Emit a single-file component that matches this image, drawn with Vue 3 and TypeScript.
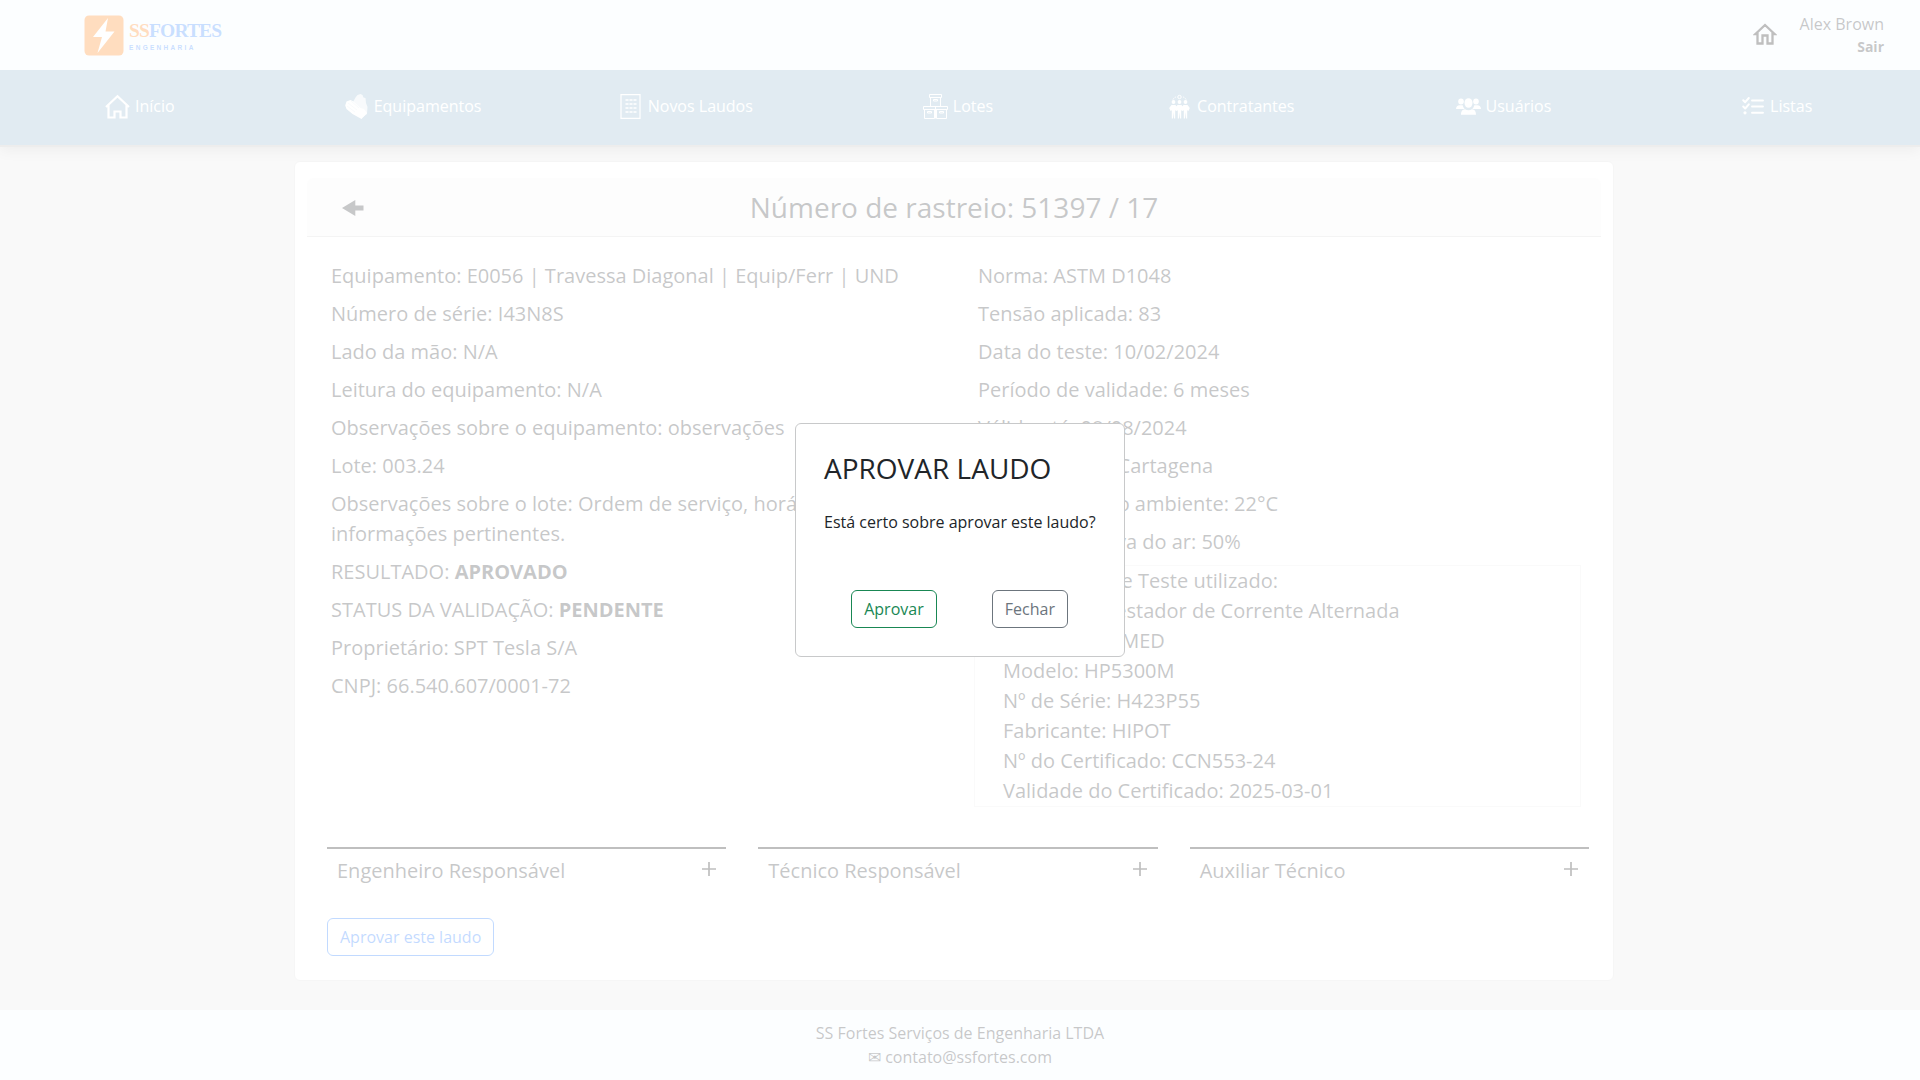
<script setup lang="ts">
interface Line {
  label: string
  strong?: string
}

const menu: { id: string; label: string }[] = [
  { id: 'home', label: 'Início' },
  { id: 'gloves', label: 'Equipamentos' },
  { id: 'report', label: 'Novos Laudos' },
  { id: 'boxes', label: 'Lotes' },
  { id: 'people', label: 'Contratantes' },
  { id: 'users', label: 'Usuários' },
  { id: 'list', label: 'Listas' },
]

const equipment: Line[] = [
  { label: 'Equipamento: E0056 | Travessa Diagonal | Equip/Ferr | UND' },
  { label: 'Número de série: I43N8S' },
  { label: 'Lado da mão: N/A' },
  { label: 'Leitura do equipamento: N/A' },
  { label: 'Observações sobre o equipamento: observações' },
  { label: 'Lote: 003.24' },
  { label: 'Observações sobre o lote: Ordem de serviço, horário, local, informações pertinentes.' },
  { label: 'RESULTADO: ', strong: 'APROVADO' },
  { label: 'STATUS DA VALIDAÇÃO: ', strong: 'PENDENTE' },
  { label: 'Proprietário: SPT Tesla S/A' },
  { label: 'CNPJ: 66.540.607/0001-72' },
]

const test: string[] = [
  'Norma: ASTM D1048',
  'Tensão aplicada: 83',
  'Data do teste: 10/02/2024',
  'Período de validade: 6 meses',
  'Válido até: 08/08/2024',
  'Local do teste: Cartagena',
  'Temperatura do ambiente: 22°C',
  'Umidade relativa do ar: 50%',
]

const instrument: string[] = [
  'Equipamento de Teste utilizado:',
  'Descrição: Testador de Corrente Alternada',
  'Marca: TECNMED',
  'Modelo: HP5300M',
  'Nº de Série: H423P55',
  'Fabricante: HIPOT',
  'Nº do Certificado: CCN553-24',
  'Validade do Certificado: 2025-03-01',
]

const staff: string[] = ['Engenheiro Responsável', 'Técnico Responsável', 'Auxiliar Técnico']
</script>

<template>
  <div class="page">
    <header class="top">
      <div class="logo">
        <svg class="bolt" width="40" height="41" viewBox="0 0 40 41">
          <rect x="0.5" y="0.5" width="39" height="40" rx="4.5" fill="#ff7a00" />
          <path d="M24 3 9 22h9l-4.500 16L30.500 16.500h-9z" fill="#fff" />
        </svg>
        <div class="brand">
          <div class="name"><span>SS</span>FORTES</div>
          <div class="sub">ENGENHARIA</div>
        </div>
      </div>
      <div class="account">
        <svg width="24" height="22" viewBox="0 0 24 22">
          <path d="M4.500 20.500V11H2.500L12 2l9.500 9h-2v9.500h-5v-8h-5v8z" fill="none" stroke="#000" stroke-width="2.300" />
        </svg>
        <div class="user">
          <div>Alex Brown</div>
          <strong>Sair</strong>
        </div>
      </div>
    </header>

    <nav class="menu">
      <a v-for="item in menu" :key="item.id" :class="item.id">
        <svg v-if="item.id === 'home'" width="25" height="25" viewBox="0 0 25 25" fill="none" stroke="#fff" stroke-width="2.200">
          <path d="M1 13 12.500 2.300 24 13M3.500 11v12.500h6v-6h6v6h6V11" />
        </svg>
        <svg v-else-if="item.id === 'gloves'" width="25" height="25" viewBox="0 0 25 25">
          <path d="M9 8 11.500 3.500l2-2.500 3-1 2 1 1 2.500 2 .500.500 5 1.500 4-.500 7-4 3z" fill="#fff" opacity=".75" />
          <path d="m1.200 11.500 1.300-4L6.500 6l3 1.500 7 6.500 3.500 1 3 4-5.500 6-9-5-6-5z" fill="#fff" />
          <path d="m4 9 9 7M3 12l8 6M7 7l8 7" stroke="#b9cfdd" stroke-width=".4" />
        </svg>
        <svg v-else-if="item.id === 'report'" width="25" height="25" viewBox="0 0 25 25" fill="none" stroke="#fff">
          <path d="M3 .600h19v23.800H3z" stroke-width="1.200" />
          <path d="M7.500 6h11M7.500 10h11M7.500 14h11M7.500 18h11" stroke-width="1.500" stroke-dasharray="3 1" />
        </svg>
        <svg v-else-if="item.id === 'boxes'" width="25" height="25" viewBox="0 0 25 25" fill="none" stroke="#fff">
          <path d="M6.500.500h12v3h-12zM7.500 3.500v8.500M17.500 3.500v8.500M.500 12.500h24v3H.500zM12.500 12.500v12M1.500 15.500v9h10v-9M13.500 15.500v9h10v-9" />
          <path d="M10.500 5.500h4v1.500h-4zM4.500 17.500h4V19h-4zM16.500 17.500h4V19h-4z" />
        </svg>
        <svg v-else-if="item.id === 'people'" width="25" height="25" viewBox="0 0 25 25" fill="#fff">
          <circle cx="12.500" cy="3" r="1.700" fill="none" stroke="#fff" />
          <path d="M6 5.500Q7 3.500 9 3M19 5.500Q18 3.500 16 3" fill="none" stroke="#fff" stroke-dasharray="1.500 1" />
          <g v-for="x in [6.500, 12.500, 18.500]" :key="x" :transform="`translate(${x} 0)`">
            <circle cy="8" r="1.900" />
            <path d="M-2 11h4l2.300 3-1.300 3-1.300-.800V24.500H.500L0 18l-.500 6.500h-1.200V16.200L-3 17l-1.300-3z" />
          </g>
        </svg>
        <svg v-else-if="item.id === 'users'" width="25" height="25" viewBox="0 0 25 25" fill="#fff">
          <ellipse cx="5" cy="7.500" rx="2.800" ry="3" />
          <ellipse cx="20" cy="7.500" rx="2.800" ry="3" />
          <ellipse cx="12.500" cy="9" rx="4" ry="4.800" />
          <path d="M0 15c0-2.500 1.500-3.800 3.500-3.800h3.200c.600 1.800 1 2.800 2 3.800zM25 15c0-2.500-1.500-3.800-3.500-3.800h-3.200c-.600 1.800-1 2.800-2 3.800zM5 20.800c0-3.800 1.500-5.300 4-5.500 2 1.200 5 1.200 7 0 2.500.200 4 1.700 4 5.500z" />
        </svg>
        <svg v-else width="25" height="25" viewBox="-2 0 25 25" fill="none" stroke="#fff" stroke-linecap="round" stroke-linejoin="round">
          <path d="m1.200 6.200 2 2L6.800 4M1.200 12.500l2 2 3.600-4.200" stroke-width="2" />
          <path d="M10 6.500h11M10 12.500h11M10 18.800h11" stroke-width="1.900" />
          <circle cx="3" cy="18.800" r="1.600" fill="#fff" stroke="none" />
        </svg>
        <span>{{ item.label }}</span>
      </a>
    </nav>

    <main class="card">
      <div class="card-head">
        <svg width="22" height="16" viewBox="0 0 22 16"><path d="M0 8 13.300 0v5.500H21.500v5H13.300V16z" fill="#212529" /></svg>
        <h1>Número de rastreio: 51397 / 17</h1>
      </div>
      <div class="details">
        <section class="left">
          <p v-for="row in equipment" :key="row.label">{{ row.label }}<strong v-if="row.strong">{{ row.strong }}</strong></p>
        </section>
        <section class="right">
          <p v-for="row in test" :key="row">{{ row }}</p>
          <ul class="instrument">
            <li v-for="row in instrument" :key="row">{{ row }}</li>
          </ul>
        </section>
      </div>
      <div class="staff">
        <div v-for="role in staff" :key="role" class="role">
          <span>{{ role }}</span>
          <svg width="14" height="14" viewBox="0 0 14 14"><path d="M7 0v14M0 7h14" stroke="#000" stroke-width="1.700" /></svg>
        </div>
      </div>
      <button class="btn primary">Aprovar este laudo</button>
    </main>

    <footer class="foot">
      <div>SS Fortes Serviços de Engenharia LTDA</div>
      <div>✉ contato@ssfortes.com</div>
    </footer>

    <div class="backdrop">
      <div class="dialog" role="dialog">
        <h2>APROVAR LAUDO</h2>
        <p>Está certo sobre aprovar este laudo?</p>
        <div class="actions">
          <button class="btn success">Aprovar</button>
          <button class="btn secondary">Fechar</button>
        </div>
      </div>
    </div>
  </div>
</template>

<style>
body {
  margin: 0;
  background: #e8e8e8;
}
</style>

<style scoped>
* {
  box-sizing: border-box;
}
.page {
  height: 1080px;
  overflow: hidden;
  display: flex;
  flex-direction: column;
  background: #e8e8e8;
  color: #212529;
  font: 16px/24px 'Open Sans', 'Noto Sans', sans-serif;
}
h1, h2, p, ul {
  margin: 0;
  padding: 0;
  font-weight: 400;
}
.top {
  flex: none;
  height: 70px;
  padding: 0 36px 0 84px;
  display: flex;
  justify-content: space-between;
  align-items: center;
  background: #f4f9ff;
  position: relative;
  z-index: 2;
}
.logo {
  display: flex;
  gap: 5px;
}
.brand {
  padding-top: 3px;
}
.name {
  font: 700 19.500px/26px 'Liberation Serif', serif;
  letter-spacing: -0.850px;
  color: #2a7fff;
}
.name span {
  color: #ff7a00;
}
.sub {
  font: 700 6.500px/8px 'Liberation Sans', sans-serif;
  letter-spacing: 2.300px;
  color: #2a7fff;
}
.account {
  display: flex;
  align-items: center;
  gap: 23px;
  padding-bottom: 2px;
}
.user {
  text-align: right;
  line-height: 24px;
}
.user strong {
  display: block;
  font-size: 14px;
  line-height: 21px;
}
.menu {
  flex: none;
  height: 75px;
  padding: 0 7px 2px 4px;
  display: flex;
  align-items: center;
  background: #86afc9;
  color: #fff;
  box-shadow: 0 2px 0 #b8b8b8, 0 5px 14px rgba(0, 0, 0, 0.220);
  z-index: 1;
}
.menu a {
  flex: 1 1 0;
  display: flex;
  align-items: flex-start;
  justify-content: center;
  gap: 5px;
}
.menu svg {
  margin-left: -1px;
}
.card {
  flex: none;
  width: 1320px;
  height: 820px;
  margin: 16px 0 0 294px;
  padding: 16px 12px 0;
  background: #fff;
  border: 1px solid #dadada;
  border-radius: 6px;
}
.card-head {
  height: 59px;
  display: flex;
  align-items: center;
  padding: 0 35px;
  background: #f7f7f7;
  border-bottom: 1px solid #d3d3d3;
  border-radius: 6px 6px 0 0;
}
.card-head svg {
  margin-top: 2px;
}
.card-head h1 {
  flex: 1;
  margin-right: 22px;
  text-align: center;
  font-size: 28px;
  line-height: 34px;
}
.details {
  display: flex;
  height: 610px;
  padding-top: 24px;
  font-size: 20px;
  line-height: 30px;
}
.left {
  width: 647px;
  padding: 0 24px;
}
.right {
  width: 647px;
  padding: 0 20px 0 24px;
}
.details p {
  margin-bottom: 8px;
}
.instrument {
  margin-left: -4px;
  width: 607px;
  padding-left: 28px;
  border: 1px solid #ebebeb;
  list-style: none;
}
.instrument li:first-child {
  margin-left: -24px;
}
.staff {
  display: flex;
  gap: 32px;
  padding: 0 12px 0 20px;
}
.role {
  flex: 1;
  height: 71px;
  padding: 0 10.500px 0 10px;
  display: flex;
  justify-content: space-between;
  border-top: 2px solid #000;
  font-size: 20px;
  line-height: 44px;
}
.role svg {
  margin-top: 13px;
}
.btn {
  height: 38px;
  padding: 0 12px;
  background: transparent;
  border: 1px solid;
  border-radius: 6px;
  font: inherit;
}
.primary {
  margin-left: 20px;
  color: #0d6efd;
}
.success {
  color: #198754;
}
.secondary {
  color: #6c757d;
}
.foot {
  flex: none;
  height: 70px;
  margin-top: 29px;
  padding-top: 11px;
  text-align: center;
  background: #f4f9ff;
}
.backdrop {
  position: fixed;
  inset: 0;
  z-index: 5;
  display: flex;
  align-items: center;
  justify-content: center;
  background: rgba(255, 255, 255, 0.750);
}
.dialog {
  width: 330px;
  height: 234px;
  padding: 27px 28px 0;
  background: #fff;
  border: 1px solid #c8c9ca;
  border-radius: 6px;
}
.dialog h2 {
  font-size: 28px;
  line-height: 34px;
}
.dialog p {
  margin-top: 25px;
}
.actions {
  display: flex;
  justify-content: space-between;
  margin-top: 56px;
  padding: 0 28px 0 27.200px;
}
</style>
